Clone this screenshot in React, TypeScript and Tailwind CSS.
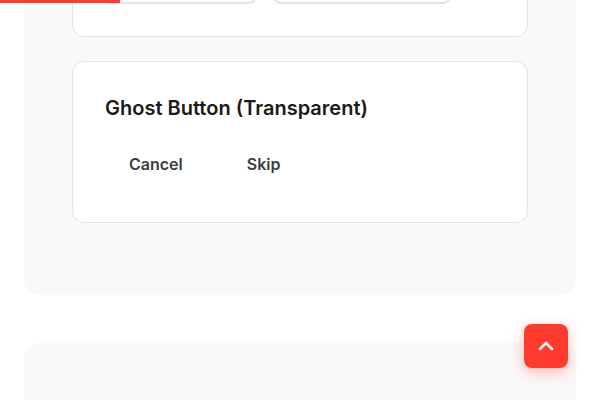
import React from "react";
import { ChevronUp } from "lucide-react";

export default function App() {
  return (
    <div className="relative min-h-[400px] overflow-hidden bg-white" style={{ fontFamily: "Inter, 'Noto Sans', sans-serif" }}>
      <div className="fixed left-0 top-0 z-20 h-[3px] w-[120px] bg-[#ff3b30]" />
      <div className="mt-[-172px] flex flex-col gap-12 px-6">
        <section className="rounded-2xl bg-[#f9f9f9] px-12 pb-[72px] pt-12">
          <div className="flex flex-col gap-6">
            <div className="rounded-xl border border-[#e3e3e3] bg-white p-8">
              <div className="mb-[17px] h-7" />
              <div className="flex gap-4">
                <div className="h-[50px] w-[152px] rounded-lg border-2 border-[#e3e3e3] bg-white" />
                <div className="h-[50px] w-[178px] rounded-lg border-2 border-[#e3e3e3] bg-white" />
              </div>
            </div>
            <div className="rounded-xl border border-[#e3e3e3] bg-white px-8 pb-[33px] pt-8">
              <h3 className="mb-[17px] text-xl font-semibold leading-7 text-[#1a1a1a]">Ghost Button (Transparent)</h3>
              <div className="flex gap-4">
                <button className="h-[50px] rounded-lg bg-transparent px-6 text-base font-semibold text-[#3d3d3d]">Cancel</button>
                <button className="h-[50px] rounded-lg bg-transparent px-6 text-base font-semibold text-[#3d3d3d]">Skip</button>
              </div>
            </div>
          </div>
        </section>
        <section className="h-[300px] rounded-2xl bg-[#f9f9f9]" />
      </div>
      <button className="fixed bottom-8 right-8 z-20 flex h-11 w-11 items-center justify-center rounded-lg bg-[#ff3b30] text-white shadow-[0_4px_14px_rgba(255,59,48,0.35)]">
        <ChevronUp size={24} strokeWidth={2.5} />
      </button>
    </div>
  );
}
